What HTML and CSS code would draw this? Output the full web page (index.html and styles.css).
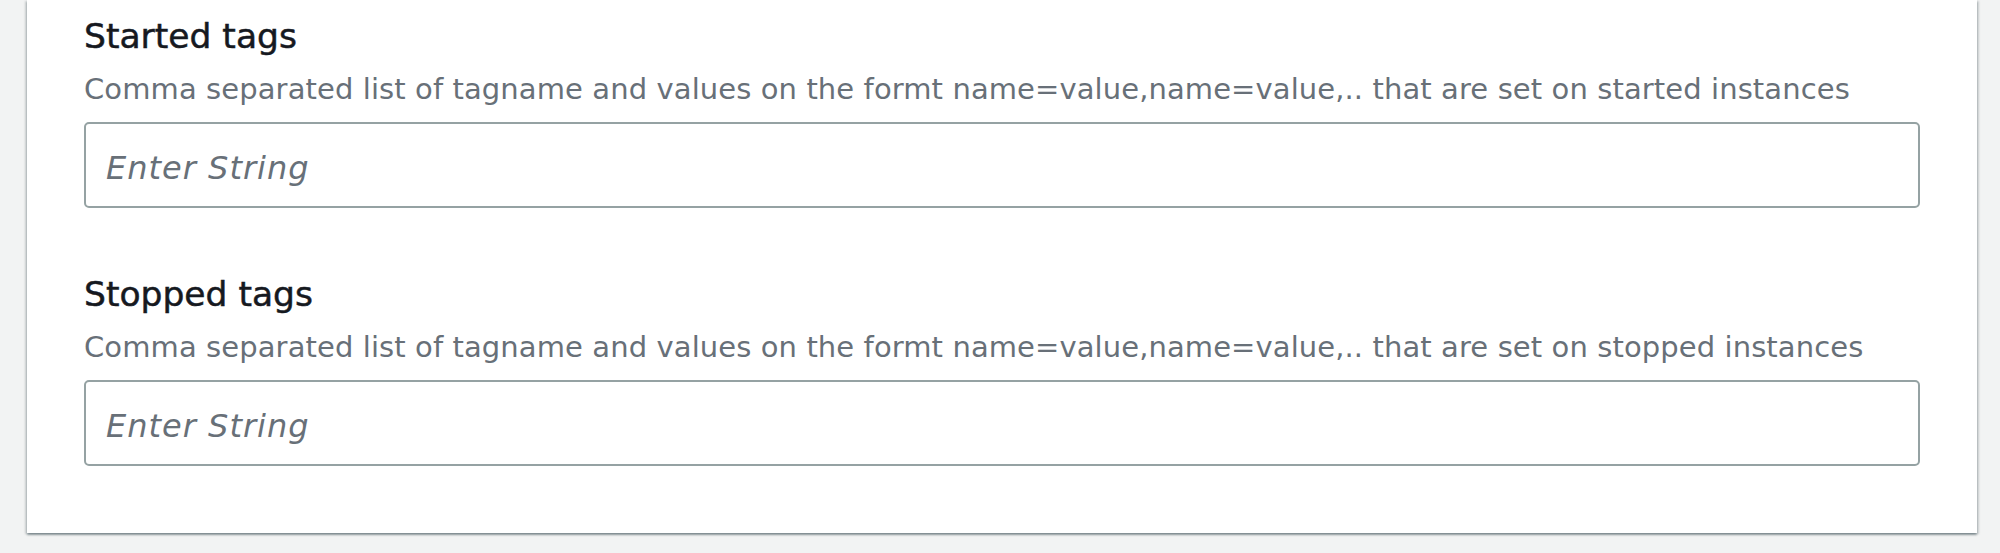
FILE: index.html
```html
<!DOCTYPE html>
<html lang="en">
<head>
<meta charset="utf-8">
<title>Tags</title>
<link rel="stylesheet" href="styles.css">
</head>
<body>
<div class="card">
  <div class="field">
    <label class="label" for="started">Started tags</label>
    <div class="desc">Comma separated list of tagname and values on the formt name=value,name=value,.. that are set on started instances</div>
    <input class="input" id="started" type="text" placeholder="Enter String">
  </div>
  <div class="field">
    <label class="label" for="stopped">Stopped tags</label>
    <div class="desc">Comma separated list of tagname and values on the formt name=value,name=value,.. that are set on stopped instances</div>
    <input class="input" id="stopped" type="text" placeholder="Enter String">
  </div>
</div>
</body>
</html>
```
FILE: styles.css
```css
html, body {
  margin: 0;
  padding: 0;
  background: #f2f3f3;
  height: 553px;
  overflow: hidden;
}
body {
  font-family: "DejaVu Sans", "Open Sans", sans-serif;
}
.card {
  margin-left: 27px;
  width: 1950px;
  box-sizing: border-box;
  background: #ffffff;
  padding: 16px 57px 67px 57px;
  box-shadow: 0 2px 2px rgba(0, 28, 36, 0.35),
              2px 1px 2px rgba(0, 28, 36, 0.15),
              -2px 1px 2px rgba(0, 28, 36, 0.15);
  display: flex;
  flex-direction: column;
  gap: 66px;
}
.field {
  display: flex;
  flex-direction: column;
}
.label {
  font-size: 34.5px;
  line-height: 40px;
  font-weight: 400;
  color: #16191f;
  -webkit-text-stroke: 0.5px #16191f;
}
.desc {
  margin-top: 16px;
  font-size: 29px;
  line-height: 34px;
  letter-spacing: 0.1px;
  color: #687078;
}
.input {
  margin: 16px 0 0 0;
  height: 86px;
  box-sizing: border-box;
  width: 100%;
  border: 2px solid #95a2a3;
  border-radius: 5px;
  padding: 6px 20px 0 20px;
  background: #ffffff;
  font-family: "DejaVu Sans", "Open Sans", sans-serif;
  font-size: 32px;
  letter-spacing: 1px;
  color: #16191f;
  outline: none;
}
.input::placeholder {
  color: #687078;
  font-style: italic;
  opacity: 1;
}
```
